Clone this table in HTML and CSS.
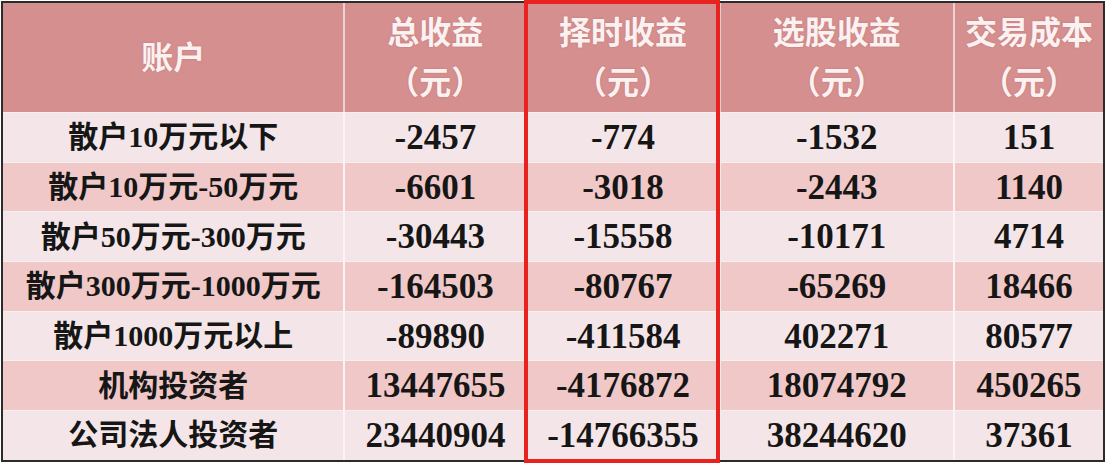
FILE: index.html
```html
<!DOCTYPE html>
<html lang="zh">
<head>
<meta charset="utf-8">
<title>收益表</title>
<link rel="stylesheet" href="styles.css">
</head>
<body>
<div class="wrap">
  <table class="tbl">
    <colgroup>
      <col class="c1"><col class="c2"><col class="c3"><col class="c4"><col class="c5">
    </colgroup>
    <thead>
      <tr>
        <th class="acct">账户</th>
        <th><span class="l1">总收益</span><span class="l2">（元）</span></th>
        <th><span class="l1">择时收益</span><span class="l2">（元）</span></th>
        <th><span class="l1">选股收益</span><span class="l2">（元）</span></th>
        <th><span class="l1">交易成本</span><span class="l2">（元）</span></th>
      </tr>
    </thead>
    <tbody>
      <tr class="odd"><td class="name">散户10万元以下</td><td>-2457</td><td>-774</td><td>-1532</td><td>151</td></tr>
      <tr class="even"><td class="name">散户10万元-50万元</td><td>-6601</td><td>-3018</td><td>-2443</td><td>1140</td></tr>
      <tr class="odd"><td class="name">散户50万元-300万元</td><td>-30443</td><td>-15558</td><td>-10171</td><td>4714</td></tr>
      <tr class="even"><td class="name">散户300万元-1000万元</td><td>-164503</td><td>-80767</td><td>-65269</td><td>18466</td></tr>
      <tr class="odd"><td class="name">散户1000万元以上</td><td>-89890</td><td>-411584</td><td>402271</td><td>80577</td></tr>
      <tr class="even"><td class="name">机构投资者</td><td>13447655</td><td>-4176872</td><td>18074792</td><td>450265</td></tr>
      <tr class="odd"><td class="name">公司法人投资者</td><td>23440904</td><td>-14766355</td><td>38244620</td><td>37361</td></tr>
    </tbody>
  </table>
  <div class="highlight"></div>
</div>
</body>
</html>
```

FILE: styles.css
```css
html, body {
  margin: 0;
  padding: 0;
  background: #ffffff;
}

.wrap {
  position: relative;
  width: 1108px;
  height: 466px;
  padding: 1px 0 0 1px;
  box-sizing: border-box;
}

.tbl {
  width: 1104px;
  border-collapse: separate;
  border-spacing: 0;
  border: 2px solid #2b2b2b;
  table-layout: fixed;
  font-family: "Liberation Serif", "Noto Sans CJK SC", serif;
  font-weight: 700;
  color: #161616;
}

.c1 { width: 340px; }
.c2 { width: 182px; }
.c3 { width: 193px; }
.c4 { width: 234px; }
.c5 { width: 150px; }

.tbl th {
  background: #d68f8f;
  color: #fbf1f1;
  font-size: 32px;
  font-weight: 700;
  height: 109px;
  padding: 0;
  text-align: center;
  vertical-align: middle;
  border-left: 2px solid #ecd3d3;
  text-shadow: 0 0 2px rgba(150, 80, 80, 0.4);
  font-family: "Noto Sans CJK SC", sans-serif;
  overflow: hidden;
  white-space: nowrap;
}

.tbl th:first-child { border-left: none; }

.tbl th .l1,
.tbl th .l2 {
  display: block;
  height: 50px;
  line-height: 50px;
}

.tbl th .l1 { margin-top: -6px; }

.tbl th.acct { padding-bottom: 6px; height: 103px; }

.tbl td {
  font-size: 35px;
  height: 48.7px;
  padding: 0;
  text-align: center;
  vertical-align: middle;
  line-height: 1;
  border-left: 2px solid #fbf3f4;
  border-top: 1px solid #f8eeee;
  white-space: nowrap;
}

.tbl td:first-child { border-left: none; }

.tbl td.name {
  font-size: 30px;
}

.odd td { background: #f4e6e8; }
.even td { background: #f0c8c8; }

.highlight {
  position: absolute;
  left: 524px;
  top: 0;
  width: 188px;
  height: 455px;
  border: 4px solid #e8221e;
  pointer-events: none;
}
```
